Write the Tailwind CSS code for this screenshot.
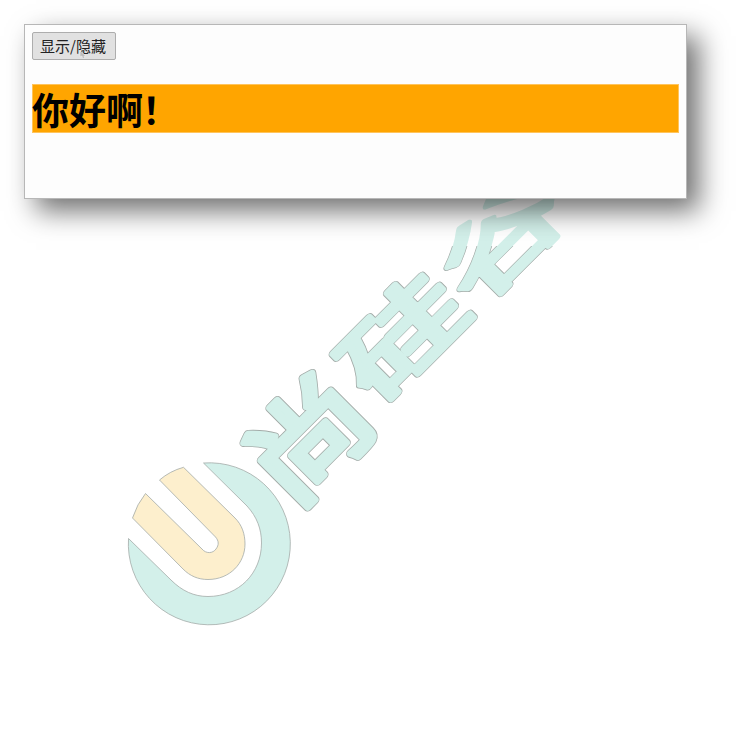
<!DOCTYPE html>
<html lang="zh-CN">
<head>
<meta charset="utf-8">
<title>显示/隐藏</title>
<script src="https://cdn.jsdelivr.net/npm/@tailwindcss/browser@4"></script>
</head>
<body class="relative h-screen overflow-hidden bg-white px-6 pt-[23.5px] font-['Noto_Sans_CJK_SC',sans-serif]">
  <!-- Watermark behind the card -->
  <svg class="absolute inset-0" width="736" height="744" viewBox="0 0 736 744" aria-hidden="true">
    <defs>
      <clipPath id="below"><rect x="0" y="246" width="736" height="498"/></clipPath>
      <g id="name" font-family="'Noto Sans CJK SC', sans-serif" font-weight="400" font-size="100" text-anchor="middle" stroke-linejoin="round">
        <g transform="rotate(-45)">
          <text transform="translate(-92 568) scale(1.28 1.06)">尚</text>
          <text transform="translate(47 556) scale(1.36 .90)">硅</text>
          <text transform="translate(186 555) scale(1.38 .84)">谷</text>
        </g>
      </g>
    </defs>
    <g stroke="#a3aba8" stroke-width=".8">
      <path fill="#d3f0ea" d="M203.500 463A81 81 0 1 1 128.500 538.500L171 580C182 591 194 596.500 208 596.500C239 596.500 261.500 573 261.500 543C261.500 529 257 517 247 506Z"/>
      <path fill="#fdefcd" d="M159.500 480Q170 471 183.500 467.300L235 518C242 525 245 534 245 544C245 563 230 579.500 208 579.500C198 579.500 190 576 183 569L132.500 518Q137 504 145.500 493.500L202 549C206 554 213 553.500 216 549C219 545 219 541 215.500 537Z"/>
    </g>
    <g clip-path="url(#below)"><use href="#name" fill="#a3aba8" stroke="#a3aba8" stroke-width="7.600"/></g>
    <use href="#name" fill="#d3f0ea" stroke="#d3f0ea" stroke-width="6.200"/>
  </svg>

  <main class="relative h-[175px] w-[663px] border border-[#b7b7b7] bg-[#fdfdfd] px-[7px] pt-2 shadow-[12px_12px_26px_rgba(0,0,0,0.56)]">
    <button class="relative -top-px flex h-[28px] w-[84px] items-center justify-center rounded-[2px] border border-[#adadad] bg-[#e1e1e1] text-[15px] leading-[25px] whitespace-nowrap text-[#222]"><span class="relative -left-px">显示/隐藏</span>
      <svg class="absolute top-[18px] left-[46px]" width="8" height="8" viewBox="0 0 8 8" aria-hidden="true"><path d="M1 0L7 5H5L5.500 7.500H3.500L3 5L1 6Z" fill="#bbb" stroke="#eee" stroke-width=".6"/></svg>
    </button>
    <h1 class="mt-[23px] h-[49px] w-[647px] border border-[#ffc45c] bg-[#ffa500] text-[37px] leading-[49px] font-bold text-black"><span class="relative -left-px block">你好啊<span class="-ml-px">！</span></span></h1>
  </main>
</body>
</html>
